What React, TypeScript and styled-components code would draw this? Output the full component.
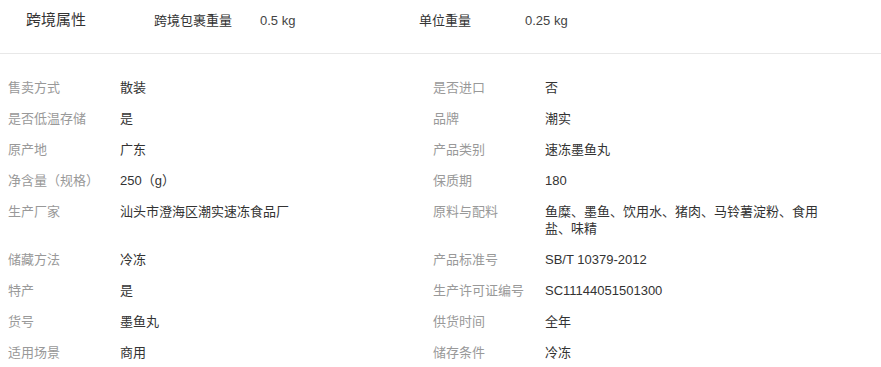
import React from 'react'
import styled, { createGlobalStyle } from 'styled-components'

interface Attr {
    label: string
    value: string
}

const crossBorder: Attr[] = [
    { label: '跨境包裹重量', value: '0.5 kg' },
    { label: '单位重量', value: '0.25 kg' }
]

const attrs: Attr[] = [
    { label: '售卖方式', value: '散装' },
    { label: '是否进口', value: '否' },
    { label: '是否低温存储', value: '是' },
    { label: '品牌', value: '潮实' },
    { label: '原产地', value: '广东' },
    { label: '产品类别', value: '速冻墨鱼丸' },
    { label: '净含量（规格）', value: '250（g）' },
    { label: '保质期', value: '180' },
    { label: '生产厂家', value: '汕头市澄海区潮实速冻食品厂' },
    { label: '原料与配料', value: '鱼糜、墨鱼、饮用水、猪肉、马铃薯淀粉、食用盐、味精' },
    { label: '储藏方法', value: '冷冻' },
    { label: '产品标准号', value: 'SB/T 10379-2012' },
    { label: '特产', value: '是' },
    { label: '生产许可证编号', value: 'SC11144051501300' },
    { label: '货号', value: '墨鱼丸' },
    { label: '供货时间', value: '全年' },
    { label: '适用场景', value: '商用' },
    { label: '储存条件', value: '冷冻' }
]

const App = () => {
    return (
        <>
            <GlobalStyle />
            <Page>
                <CrossBorder>
                    <CrossTitle>跨境属性</CrossTitle>
                    {crossBorder.map(item => (
                        <CrossItem key={item.label}>
                            <CrossLabel>{item.label}</CrossLabel>
                            <CrossValue>{item.value}</CrossValue>
                        </CrossItem>
                    ))}
                </CrossBorder>
                <AttrGrid>
                    {attrs.map(item => (
                        <AttrItem key={item.label}>
                            <AttrLabel>{item.label}</AttrLabel>
                            <AttrValue>{item.value}</AttrValue>
                        </AttrItem>
                    ))}
                </AttrGrid>
            </Page>
        </>
    )
}

const GlobalStyle = createGlobalStyle`
    body {
        margin: 0;
        background: #fff;
        font-family: "Liberation Sans", "Noto Sans CJK SC", sans-serif;
    }
`

const Page = styled.div`
    width: 881px;
`

const CrossBorder = styled.div`
    display: flex;
    align-items: center;
    height: 40px;
    padding: 0 0 13px 26px;
    border-bottom: 1px solid #e8e8e8;
    color: #333;
`

const CrossTitle = styled.div`
    width: 128px;
    font-size: 15px;
    line-height: 20px;
`

const CrossItem = styled.div`
    display: flex;
    align-items: center;
    width: 265px;
    font-size: 13px;
    line-height: 17px;
`

const CrossLabel = styled.span`
    width: 106px;
`

const CrossValue = styled.span`
    color: #444;
`

const AttrGrid = styled.div`
    display: grid;
    grid-template-columns: 425px 425px;
    padding: 18px 0 0 8px;
`

const AttrItem = styled.div`
    display: flex;
    align-items: flex-start;
    padding: 7px 0;
    font-size: 13px;
    line-height: 17px;
`

const AttrLabel = styled.span`
    flex: 0 0 112px;
    color: #999;
`

const AttrValue = styled.span`
    width: 280px;
    color: #333;
`

export default App
